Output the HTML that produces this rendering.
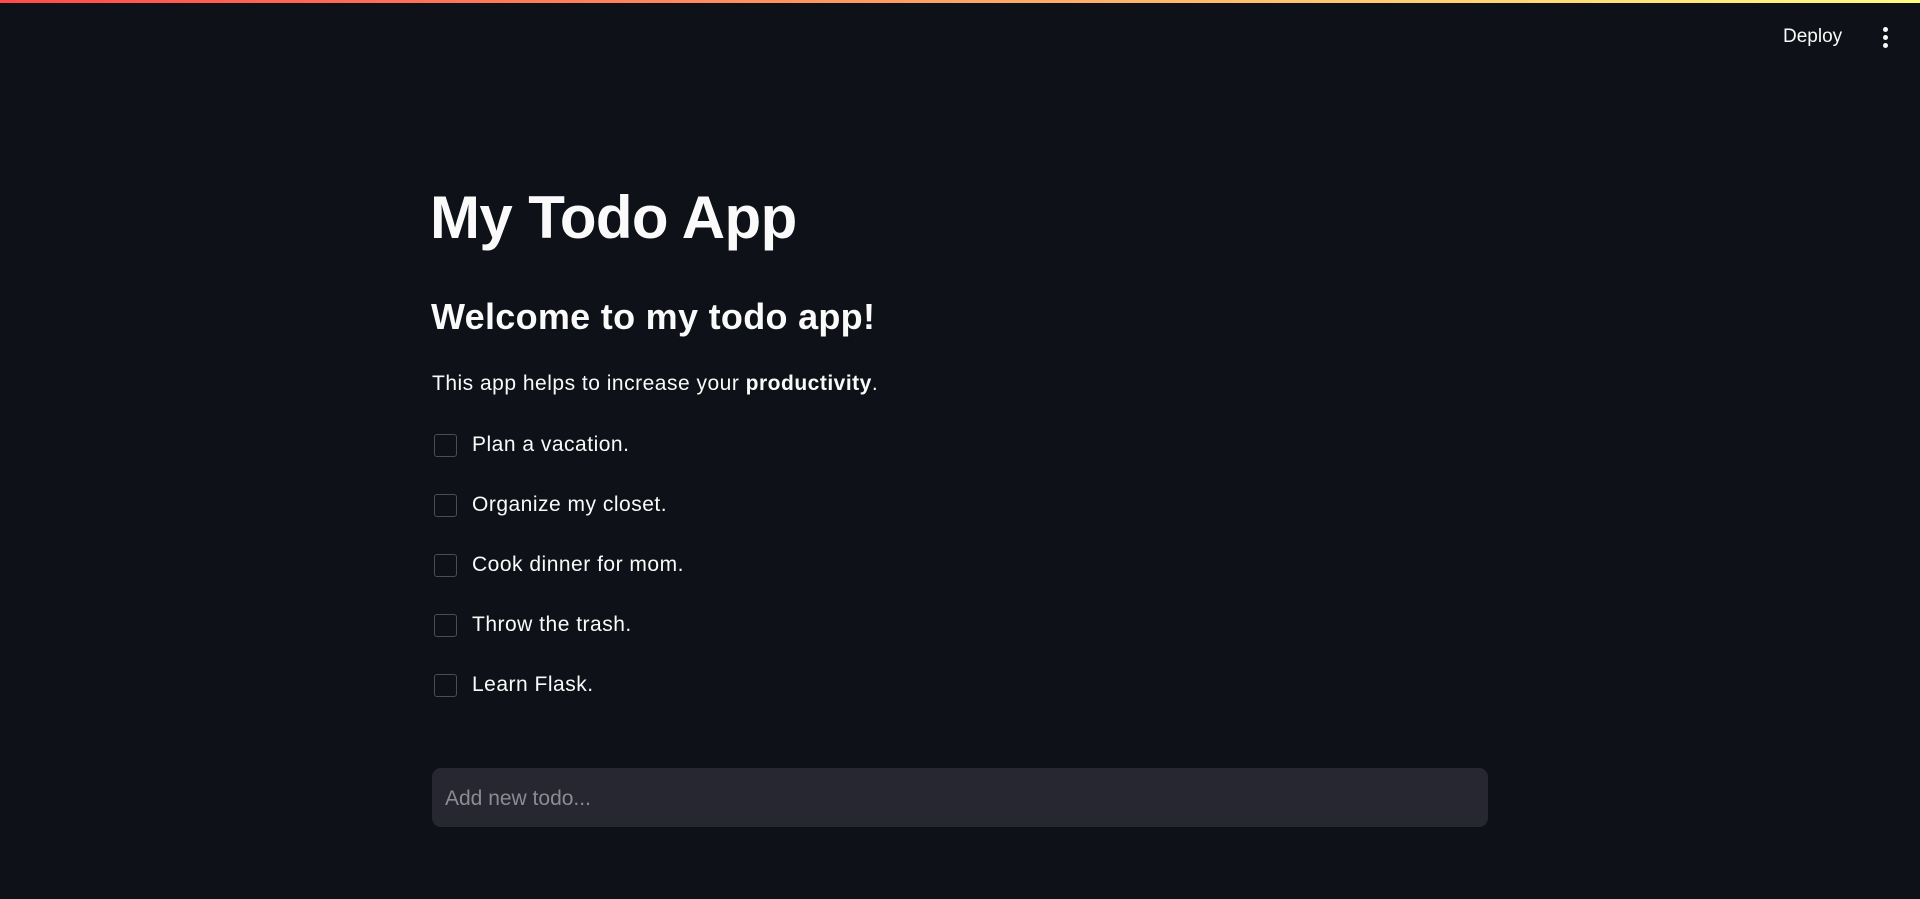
<!DOCTYPE html>
<html><head><style>
html,body{margin:0;width:1920px;height:899px;background:#0e1117;overflow:hidden;font-family:"Liberation Sans",sans-serif;color:#fafafa;}
.bar{position:absolute;top:0;left:0;width:1920px;height:3px;background:linear-gradient(90deg,#ff4b4b,#fffd80);}
.deploy{position:absolute;left:1783px;top:26px;font-size:19px;}
.dots{position:absolute;left:1883px;top:27px;}
.dots i{display:block;width:5px;height:5px;border-radius:50%;background:#fafafa;margin-bottom:3px;}
h1{position:absolute;left:430px;top:182px;margin:0;font-size:60px;font-weight:bold;letter-spacing:-0.6px;line-height:1.2;}
h2{position:absolute;left:431px;top:295px;margin:0;font-size:36px;font-weight:bold;letter-spacing:0.3px;line-height:1.2;}
p{position:absolute;left:432px;top:370px;margin:0;font-size:21px;letter-spacing:0.5px;line-height:1.3;}
.cb{position:absolute;left:434px;font-size:21px;letter-spacing:0.5px;display:flex;align-items:center;}
.cb span{border:1px solid #4a4d57;border-radius:3px;margin-right:15px;box-sizing:border-box;width:23px;height:23px;}
.inp{position:absolute;left:432px;top:768px;width:1056px;height:59px;background:#262730;border-radius:9px;}
.inp div{position:absolute;left:13px;top:19px;font-size:21px;color:#8a8c93;letter-spacing:0;}
</style></head><body>
<div class="bar"></div>
<div class="deploy">Deploy</div>
<div class="dots"><i></i><i></i><i></i></div>
<h1>My Todo App</h1>
<h2>Welcome to my todo app!</h2>
<p>This app helps to increase your <b>productivity</b>.</p>
<div class="cb" style="top:433px"><span></span>Plan a vacation.</div>
<div class="cb" style="top:493px"><span></span>Organize my closet.</div>
<div class="cb" style="top:553px"><span></span>Cook dinner for mom.</div>
<div class="cb" style="top:613px"><span></span>Throw the trash.</div>
<div class="cb" style="top:673px"><span></span>Learn Flask.</div>
<div class="inp"><div>Add new todo...</div></div>
</body></html>
